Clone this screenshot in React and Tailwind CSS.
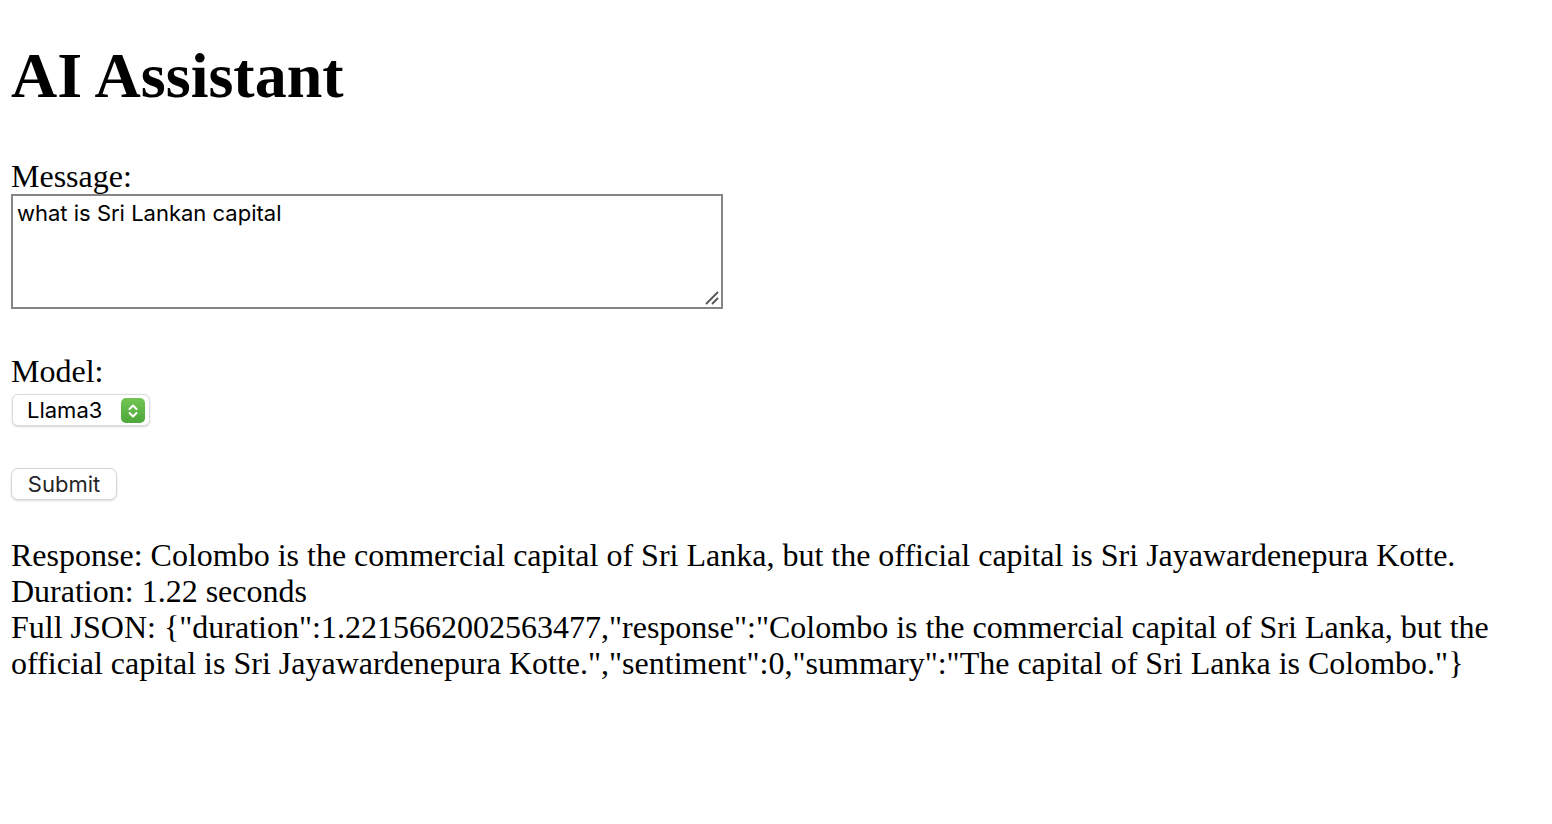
import React from "react";

export default function App() {
  return (
    <div className="min-h-screen bg-white px-[11px] text-black font-['Liberation_Serif','Times_New_Roman',serif] text-[32px] leading-[36px]">
      <h1 className="pt-[39px] text-[64px] font-bold leading-[74px] mb-[45px]">AI Assistant</h1>
      <div>Message:</div>
      <div className="relative w-[712px] h-[115px]">
        <textarea
          defaultValue="what is Sri Lankan capital"
          className="block w-[712px] h-[115px] resize-none border-2 border-[#858585] bg-white pl-[4px] pr-[4px] pt-[4px] font-['Inter',sans-serif] text-[22px] leading-[27px] text-black outline-none"
        />
        <svg className="absolute right-[4px] bottom-[4px]" width="15" height="15" viewBox="0 0 15 15">
          <line x1="2" y1="14" x2="14" y2="2" stroke="#555555" strokeWidth="1.8" />
          <line x1="8" y1="14" x2="14" y2="8" stroke="#555555" strokeWidth="1.8" />
        </svg>
      </div>
      <div className="mt-[44px]">Model:</div>
      <div className="mt-[5px] ml-[1px] relative flex items-center w-[138px] h-[32px] rounded-[6px] border border-[#dcdcdc] bg-white shadow-[0_1px_2px_rgba(0,0,0,0.18)]">
        <span className="pl-[14px] font-['Inter',sans-serif] text-[22px] leading-[26px] text-black">Llama3</span>
        <span className="absolute right-[4px] top-[3px] flex h-[25px] w-[24px] items-center justify-center rounded-[5px] bg-gradient-to-b from-[#72c552] to-[#4ea73a]">
          <svg width="12" height="18" viewBox="0 0 12 18" fill="none">
            <path d="M2.5 7 L6 3.5 L9.5 7" stroke="white" strokeWidth="2" strokeLinecap="round" strokeLinejoin="round" />
            <path d="M2.5 11 L6 14.5 L9.5 11" stroke="white" strokeWidth="2" strokeLinecap="round" strokeLinejoin="round" />
          </svg>
        </span>
      </div>
      <button className="mt-[42px] flex h-[32px] w-[106px] items-center justify-center rounded-[7px] border border-[#d6d6d6] bg-white shadow-[0_1px_2px_rgba(0,0,0,0.15)] font-['Inter',sans-serif] text-[22px] leading-[26px] text-[#262626]">
        Submit
      </button>
      <div className="mt-[37px]">
        <div>Response: Colombo is the commercial capital of Sri Lanka, but the official capital is Sri Jayawardenepura Kotte.</div>
        <div>Duration: 1.22 seconds</div>
        <div>Full JSON: {'{"duration":1.2215662002563477,"response":"Colombo is the commercial capital of Sri Lanka, but the official capital is Sri Jayawardenepura Kotte.","sentiment":0,"summary":"The capital of Sri Lanka is Colombo."}'}</div>
      </div>
    </div>
  );
}
